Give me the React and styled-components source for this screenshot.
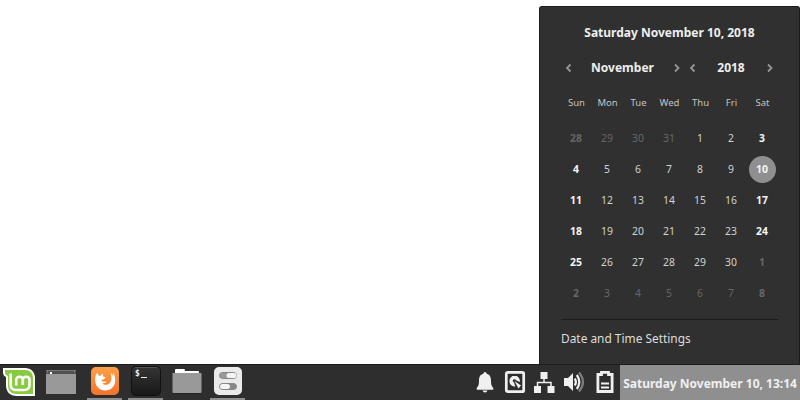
import React from 'react';
import styled, { createGlobalStyle } from 'styled-components';

const GlobalStyle = createGlobalStyle`
  * { box-sizing: border-box; }
  body { margin: 0; overflow: hidden; background: #fff; font-family: "Noto Sans", sans-serif; }
`;

const Desktop = styled.div`
  width: 800px;
  height: 400px;
  display: flex;
  flex-direction: column;
  background: #fff;
`;

const Workspace = styled.main`
  height: 364px;
  display: flex;
  justify-content: flex-end;
  align-items: flex-end;
`;

const Popup = styled.section`
  width: 261px;
  height: 358px;
  padding: 15px 21px 0;
  background: #303030;
  border: 1px solid #1c1c1c;
  border-bottom: 0;
  border-radius: 3px 3px 0 0;
  color: #eee;
`;

const Title = styled.h1`
  margin: 0;
  height: 22px;
  line-height: 22px;
  font-size: 12px;
  font-weight: 700;
  text-align: center;
`;

const Switchers = styled.div`
  display: flex;
  height: 20px;
  margin-top: 14px;
`;

const Switcher = styled.div`
  width: ${(p) => p.$width}px;
  display: flex;
  align-items: center;
  justify-content: space-between;
  font-size: 12px;
  font-weight: 700;
  line-height: 20px;
`;

const SwitcherLabel = styled.span`
  margin-right: 1px;
`;

const Arrow = styled.button`
  width: 16px;
  height: 20px;
  padding: 0;
  border: 0;
  background: none;
  display: flex;
  align-items: center;
  justify-content: center;
`;

const Week = styled.div`
  display: grid;
  grid-template-columns: repeat(7, 31px);
  grid-auto-rows: 31px;
  margin-top: ${(p) => p.$gap}px;
`;

const Weekday = styled.div`
  line-height: 31px;
  text-align: center;
  font-size: 9.5px;
  color: #c4c4c4;
`;

const Cell = styled.div`
  display: flex;
  align-items: center;
  justify-content: center;
`;

const Day = styled.span`
  width: 27px;
  height: 27px;
  padding-right: 1px;
  border-radius: 50%;
  line-height: 27px;
  text-align: center;
  font-size: 10.4px;
  font-weight: ${(p) => (p.$weekend ? 700 : 400)};
  color: ${(p) => (p.$outside ? '#666' : p.$weekend ? '#f5f5f5' : '#d2d2d2')};
  background: ${(p) => (p.$today ? '#8f8f8f' : 'transparent')};
`;

const Divider = styled.hr`
  height: 1px;
  margin: 10px 0 0;
  border: 0;
  background: #1c1c1c;
`;

const SettingsLink = styled.div`
  height: 20px;
  margin-top: 8px;
  line-height: 20px;
  font-size: 11.9px;
  color: #dedede;
`;

const Panel = styled.footer`
  height: 36px;
  display: flex;
  justify-content: space-between;
  background: #2e2e2e;
  border-top: 1px solid #1c1c1c;
`;

const Launchers = styled.nav`
  display: flex;
`;

const MenuButton = styled.div`
  width: 43px;
  padding: 1px 0 0 2px;
`;

const Launcher = styled.div`
  width: 35px;
  height: 35px;
  margin-right: ${(p) => p.$gap ?? 6}px;
  padding: 0 1px 0 2px;
  border-bottom: 2px solid ${(p) => (p.$open ? '#8f8f8f' : 'transparent')};
`;

const Tray = styled.div`
  display: flex;
`;

const TrayIcon = styled.div`
  width: 30px;
  height: 35px;
  padding-top: 5px;
  display: flex;
  justify-content: center;
`;

const Clock = styled.div`
  width: 180px;
  text-align: center;
  background: #8f8f8f;
  color: #f0f0f0;
  font-size: 12px;
  font-weight: 700;
  line-height: 37px;
  white-space: nowrap;
`;

const Chevron = ({ right }) => (
  <svg width="8" height="10" viewBox="0 0 8 10" fill="none" stroke="#969696" strokeWidth="1.8">
    <path d={right ? 'M2 1.500 5.500 5 2 8.500' : 'M5.500 1.500 2 5 5.500 8.500'} />
  </svg>
);

const MintLogo = () => (
  <svg width="34" height="31" viewBox="0 0 34 31">
    <path d="M1 2h22c6 0 10 4 10 10v18H15C8 30 4 26 4 19v-8q-3-1-3-5z" fill="#fff" />
    <path d="M3 4h20c5 0 8 3 8 8v16H15c-6 0-9-3-9-9v-9q-3-1-3-4z" fill="#88ca41" />
    <path
      d="M8.700 7.500v11.500c0 3 2 5 5 5h8.800c3 0 5-2 5-5v-5c0-2-1.300-3.300-3.300-3.300S20.800 12 20.800 14v5v-5c0-2-1.300-3.300-3.300-3.300S14.200 12 14.200 14v5.500"
      fill="none"
      stroke="#fff"
      strokeWidth="2.6"
    />
  </svg>
);

const DesktopIcon = () => (
  <svg width="32" height="32" viewBox="0 0 32 32">
    <path d="M1 5h30v24H1z" fill="#999" />
    <path d="M1 5h30v4H1z" fill="#505050" />
    <path d="M1 5.500h30" stroke="#777" />
    <path d="M5 7h2v2H5z" fill="#fff" />
    <path d="M29 7h1M2 7h1" stroke="#aaa" />
  </svg>
);

const FirefoxIcon = () => (
  <svg width="32" height="32" viewBox="0 0 32 32">
    <defs>
      <linearGradient id="fox" x1="0" y1="0" x2="0" y2="1">
        <stop stopColor="#ffa047" />
        <stop offset="1" stopColor="#f37329" />
      </linearGradient>
    </defs>
    <rect x="2" y="2" width="28" height="28" rx="5" fill="url(#fox)" />
    <path
      d="M8.200 7.500C6 10.500 5.800 14 6.300 17c.9 5 5 8.500 10 8.500 5.500 0 9.800-4.200 9.900-9.500 0-3.500-.6-6-2.200-8.500 0 1.500 0 2.500-.3 3.200-.6-1.500-1.200-2.300-2.200-3 1 2.900 1.300 5.600.6 7.800-.8 2.700-2.700 4.300-5 4.300-1.800 0-3-.6-3.700-1.600 2 .3 3.200-.1 4.200-1.100-.7-.9-1.600-.8-2.600-.5-1.400.2-2.300-.4-2.500-1.500.6-.7 1.400-.7 2.300-.3.300-1 .9-1.400 2-2.200-.6-.8-1.500-1-2.400-.9-.5-.8-.5-1.800-.1-2.900-1.400.4-2.300 1.100-3 2.100-1.200-.2-2.400-.8-3.100-3.400z"
      fill="#fff"
    />
  </svg>
);

const PromptText = styled.text`
  font-family: "DejaVu Sans Mono", monospace;
  font-size: 8px;
  font-weight: 700;
  fill: #eee;
`;

const TerminalIcon = () => (
  <svg width="32" height="32" viewBox="0 0 32 32">
    <defs>
      <linearGradient id="term" x1="0" y1="0" x2="0" y2="1">
        <stop stopColor="#353535" />
        <stop offset="1" stopColor="#181818" />
      </linearGradient>
    </defs>
    <rect x="1.500" y="1.500" width="29" height="29" rx="4" fill="url(#term)" stroke="#111" />
    <path d="M5 2.500h22" stroke="#555" />
    <PromptText x="5" y="11">$</PromptText>
    <path d="M11 12.500h6" stroke="#eee" />
  </svg>
);

const FolderIcon = () => (
  <svg width="32" height="32" viewBox="0 0 32 32">
    <path d="M4 8V5q0-1 1-1h8q1 0 1 2h13q1 0 1 1v2H3z" fill="#fff" />
    <path d="M1.500 8h29v19q0 1-1 1h-27q-1 0-1-1z" fill="#999" />
    <path d="M2 28.500h28" stroke="#222" />
  </svg>
);

const SettingsIcon = () => (
  <svg width="32" height="32" viewBox="0 0 32 32">
    <rect x="2" y="2" width="28" height="28" rx="5" fill="#eaeaea" />
    <rect x="7.500" y="7.500" width="17" height="6" rx="3" fill="#999" stroke="#888" />
    <rect x="14.500" y="8" width="10" height="5" rx="2.500" fill="#f4f4f4" />
    <rect x="7.500" y="18.500" width="17" height="6" rx="3" fill="#888" stroke="#888" />
    <rect x="8" y="19" width="10" height="5" rx="2.500" fill="#f4f4f4" />
  </svg>
);

const BellIcon = () => (
  <svg width="24" height="24" viewBox="0 0 24 24" fill="#f0f0f0">
    <path d="M12 2q1.500 0 1.700 1.800C17 4.600 18 7 18 11c0 4 .8 5.500 2.300 7v1.800H3.700V18C5.200 16.500 6 15 6 11c0-4 1-6.400 4.300-7.200Q10.500 2 12 2z" />
    <path d="M9.500 20.500h5q-.5 2-2.500 2t-2.500-2z" />
  </svg>
);

const DiskIcon = () => (
  <svg width="24" height="24" viewBox="0 0 24 24">
    <rect x="3.300" y="2.300" width="17.400" height="19.400" rx="1.500" fill="none" stroke="#f0f0f0" strokeWidth="2.7" />
    <path d="M11.500 5.500a5.500 5.500 0 1 0 .8 11L11 12.500a1.700 1.700 0 1 1 2-2.300l3.800 1.800a5.500 5.500 0 0 0-5.300-6.500z" fill="#f0f0f0" />
    <path d="m11.500 11 6.500 4.500-2.500 3z" fill="#f0f0f0" />
  </svg>
);

const NetworkIcon = () => (
  <svg width="24" height="24" viewBox="2 0 24 24" fill="#f0f0f0">
    <path d="M9.500 2h7v7h-7zM3 16h7v7H3zM16.500 16h7v7h-7z" />
    <path d="M13 9v4M6.500 16v-3.500H20V16" fill="none" stroke="#f0f0f0" strokeWidth="1.5" />
  </svg>
);

const VolumeIcon = () => (
  <svg width="24" height="24" viewBox="1 0 24 24" fill="none" strokeWidth="2.2">
    <path d="M2 8h4l5-5v18l-5-5H2z" fill="#f0f0f0" />
    <path d="M12.800 8.500q2.200 3.500 0 7M14.800 5q5 7 0 14" stroke="#f0f0f0" />
    <path d="M17 2.500q8 9.500 0 19" stroke="#7d7d7d" />
  </svg>
);

const BatteryIcon = () => (
  <svg width="24" height="24" viewBox="0 0 24 24" fill="none" stroke="#f0f0f0" strokeWidth="2.8">
    <path d="M8.500 2.300h7V4.500h3.600v17H4.900v-17h3.600z" />
    <path d="M8 13.500h8M8 17.500h8" strokeWidth="2" />
  </svg>
);

const weekdays = ['Sun', 'Mon', 'Tue', 'Wed', 'Thu', 'Fri', 'Sat'];
const days = [
  ...[28, 29, 30, 31].map((n) => ({ n, outside: true })),
  ...Array.from({ length: 30 }, (_, i) => ({ n: i + 1, today: i + 1 === 10 })),
  ...[1, 2, 3, 4, 5, 6, 7, 8].map((n) => ({ n, outside: true })),
];

export default function App() {
  return (
    <Desktop>
      <GlobalStyle />
      <Workspace>
        <Popup>
          <Title>Saturday November 10, 2018</Title>
          <Switchers>
            <Switcher $width={124}>
              <Arrow aria-label="Previous month"><Chevron /></Arrow>
              <SwitcherLabel>November</SwitcherLabel>
              <Arrow aria-label="Next month"><Chevron right /></Arrow>
            </Switcher>
            <Switcher $width={93}>
              <Arrow aria-label="Previous year"><Chevron /></Arrow>
              <SwitcherLabel>2018</SwitcherLabel>
              <Arrow aria-label="Next year"><Chevron right /></Arrow>
            </Switcher>
          </Switchers>
          <Week $gap={9}>
            {weekdays.map((d) => <Weekday key={d}>{d}</Weekday>)}
          </Week>
          <Week $gap={5}>
            {days.map((d, i) => (
              <Cell key={i}>
                <Day $weekend={i % 7 === 0 || i % 7 === 6} $outside={d.outside} $today={d.today}>{d.n}</Day>
              </Cell>
            ))}
          </Week>
          <Divider />
          <SettingsLink>Date and Time Settings</SettingsLink>
        </Popup>
      </Workspace>
      <Panel>
        <Launchers>
          <MenuButton><MintLogo /></MenuButton>
          <Launcher $gap={9}><DesktopIcon /></Launcher>
          <Launcher $open><FirefoxIcon /></Launcher>
          <Launcher $open><TerminalIcon /></Launcher>
          <Launcher><FolderIcon /></Launcher>
          <Launcher $open><SettingsIcon /></Launcher>
        </Launchers>
        <Tray>
          <TrayIcon><BellIcon /></TrayIcon>
          <TrayIcon><DiskIcon /></TrayIcon>
          <TrayIcon><NetworkIcon /></TrayIcon>
          <TrayIcon><VolumeIcon /></TrayIcon>
          <TrayIcon><BatteryIcon /></TrayIcon>
          <Clock>Saturday November 10, 13:14</Clock>
        </Tray>
      </Panel>
    </Desktop>
  );
}
